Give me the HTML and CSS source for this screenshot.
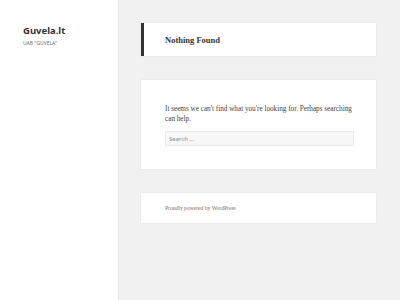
FILE: index.html
```html
<!DOCTYPE html>
<html lang="lt">
<head>
  <meta charset="UTF-8" />
  <meta name="viewport" content="width=device-width, initial-scale=1.0" />
  <title>Guvela.lt</title>
  <link rel="stylesheet" href="styles.css">
</head>
<body>
  <div class="site">
    <!-- Sidebar -->
    <aside class="sidebar">
      <div class="site-title">Guvela.lt</div>
      <div class="site-description">UAB "GUVELA"</div>
    </aside>

    <!-- Main column -->
    <main class="main">
      <header class="page-header">
        <h1 class="page-title">Nothing Found</h1>
      </header>

      <section class="page-content">
        <p>It seems we can't find what you're looking for. Perhaps searching can help.</p>
        <input class="search-field" type="search" placeholder="Search …">
      </section>

      <footer class="site-footer">
        Proudly powered by WordPress
      </footer>
    </main>
  </div>
</body>
</html>
```

FILE: styles.css
```css
* {
  box-sizing: border-box;
}

html, body {
  margin: 0;
  padding: 0;
  height: 100%;
  background-color: #f1f1f1;
  color: #333;
  font-family: 'Liberation Serif', serif;
}

.site {
  display: flex;
  min-height: 100vh;
}

.sidebar {
  width: 118px;
  flex-shrink: 0;
  background-color: #fff;
  box-shadow: 0 0 1px rgba(0, 0, 0, 0.15);
  padding: 24px 0 0 23px;
}

.site-title {
  font-family: 'Noto Sans', sans-serif;
  font-weight: 700;
  font-size: 9.5px;
  line-height: 13px;
  color: #333;
}

.site-description {
  font-family: 'Noto Sans', sans-serif;
  font-size: 5px;
  line-height: 8px;
  margin-top: 2px;
  color: #707070;
}

.main {
  width: 235px;
  margin-left: 23px;
  padding-top: 23px;
  display: flex;
  flex-direction: column;
  gap: 24px;
}

.page-header,
.page-content,
.site-footer {
  background-color: #fff;
  box-shadow: 0 0 1px rgba(0, 0, 0, 0.15);
}

.page-header {
  height: 33px;
  border-left: 3px solid #333;
  padding-left: 21px;
  display: flex;
  align-items: center;
}

.page-title {
  margin: 0;
  font-size: 8.5px;
  font-weight: 700;
  color: #333;
}

.page-content {
  height: 89px;
  padding: 25px 24px 0 24px;
}

.page-content p {
  margin: 0 0 7px;
  font-size: 7.2px;
  line-height: 9.5px;
  color: #444;
}

.search-field {
  display: block;
  width: 189px;
  height: 15px;
  margin: 0;
  padding: 0 3px;
  border: 1px solid #eaeaea;
  background-color: #f7f7f7;
  font-family: 'Noto Sans', sans-serif;
  font-size: 6px;
  color: #707070;
  outline: none;
}

.search-field::placeholder {
  color: #8a8a8a;
}

.site-footer {
  height: 30px;
  padding-left: 24px;
  display: flex;
  align-items: center;
  font-size: 5.6px;
  color: #707070;
}
```
